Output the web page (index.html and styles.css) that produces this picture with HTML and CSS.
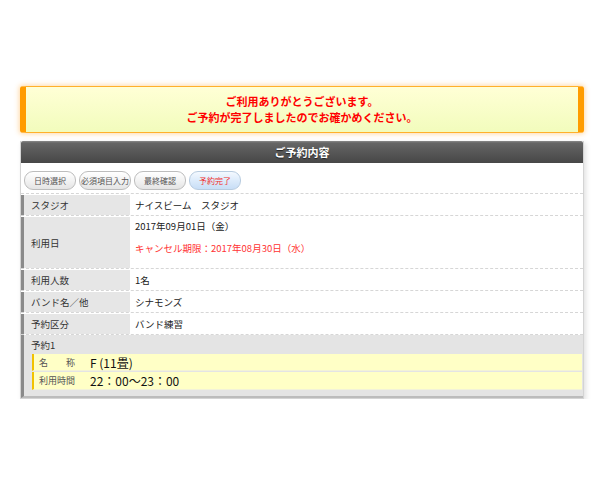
FILE: index.html
```html
<!DOCTYPE html>
<html lang="ja">
<head>
<meta charset="utf-8">
<link rel="stylesheet" href="styles.css">
</head>
<body>
<div class="page">
  <div class="notice">
    <p>ご利用ありがとうございます。</p>
    <p>ご予約が完了しましたのでお確かめください。</p>
  </div>
  <div class="card">
    <div class="card-head">ご予約内容</div>
    <div class="steps">
      <span class="step">日時選択</span>
      <span class="step">必須項目入力</span>
      <span class="step">最終確認</span>
      <span class="step current">予約完了</span>
    </div>
    <div class="row">
      <div class="label">スタジオ</div>
      <div class="value">ナイスビーム　スタジオ</div>
    </div>
    <div class="row tall">
      <div class="label">利用日</div>
      <div class="value">
        <div>2017年09月01日（金）</div>
        <div class="cancel">キャンセル期限：2017年08月30日（水）</div>
      </div>
    </div>
    <div class="row">
      <div class="label">利用人数</div>
      <div class="value">1名</div>
    </div>
    <div class="row">
      <div class="label">バンド名／他</div>
      <div class="value">シナモンズ</div>
    </div>
    <div class="row">
      <div class="label">予約区分</div>
      <div class="value">バンド練習</div>
    </div>
    <div class="reserve">
      <div class="reserve-title">予約1</div>
      <div class="item">
        <span class="item-label">名　　称</span>
        <span class="item-value">F (11畳)</span>
      </div>
      <div class="item">
        <span class="item-label">利用時間</span>
        <span class="item-value">22：00〜23：00</span>
      </div>
    </div>
  </div>
</div>
</body>
</html>
```

FILE: styles.css
```css
* { box-sizing: border-box; }
html, body { margin: 0; padding: 0; background: #fff; }
body {
  font-family: "Noto Sans CJK JP", "Liberation Sans", sans-serif;
  color: #333;
}
.page {
  padding: 86px 16px 0 20px;
}
.notice {
  height: 47px;
  border-top: 1px solid #ffb02a;
  border-bottom: 1px solid #ffb02a;
  border-left: 6px solid #ff9c00;
  border-right: 6px solid #ff9c00;
  border-radius: 3px;
  background: linear-gradient(#ffffd6, #f2fcbc);
  box-shadow: 0 0 5px 1px rgba(255, 170, 60, 0.45);
  padding-top: 6px;
  text-align: center;
}
.notice p {
  margin: 0;
  color: #f00;
  font-weight: bold;
  font-size: 11px;
  line-height: 16px;
}
.card {
  margin-top: 8px;
  border: 1px solid #d4d4d4;
  border-top: none;
  background: #fff;
  box-shadow: 2px 2px 5px rgba(0, 0, 0, 0.12);
}
.card-head {
  height: 22px;
  line-height: 22px;
  text-align: center;
  color: #fff;
  font-weight: bold;
  font-size: 11px;
  background: linear-gradient(#8a8a8a 0, #666 2px, #575757 50%, #474747 100%);
  text-shadow: 0 1px 1px #222;
  border-radius: 2px 2px 0 0;
}
.steps {
  display: flex;
  gap: 3px;
  padding: 8px 3px 3px 3px;
  border-bottom: 1px dashed #d6d6d6;
}
.step {
  width: 52px;
  height: 19px;
  line-height: 17px;
  text-align: center;
  font-size: 8px;
  color: #555;
  border: 1px solid #bdbdbd;
  border-radius: 9px;
  background: linear-gradient(#ffffff, #f3f3f3 50%, #e4e4e4);
}
.step.current {
  color: #f03030;
  border-color: #b8cce0;
  background: linear-gradient(#f4f9ff, #dcebfb 50%, #c8def6);
}
.row {
  display: flex;
  padding-top: 1px;
  border-bottom: 1px dashed #d6d6d6;
}
.label {
  width: 109px;
  height: 20px;
  display: flex;
  align-items: center;
  padding-left: 7px;
  background: #e6e6e6;
  border-left: 3px solid #8a8a8a;
  font-size: 9.5px;
  color: #333;
}
.row.tall .label { height: 51px; }
.value {
  flex: 1;
  padding-left: 5px;
  display: flex;
  align-items: center;
  font-size: 9.5px;
  color: #222;
}
.row.tall .value {
  flex-direction: column;
  align-items: flex-start;
  justify-content: flex-start;
  padding-top: 2px;
  line-height: 14px;
  gap: 8px;
}
.cancel { color: #f33; }
.reserve {
  background: #e4e4e4;
  border-left: 3px solid #8a8a8a;
  border-bottom: 2px solid #bcbcbc;
  padding: 3px 1px 5px 8px;
}
.reserve-title {
  font-size: 9.5px;
  color: #333;
  line-height: 14px;
  margin-left: -1px;
  margin-bottom: 2px;
}
.item {
  display: flex;
  align-items: center;
  height: 17px;
  background: #ffffc6;
  border-left: 2px solid #f2c200;
  border-bottom: 1px solid #f2f2d8;
  margin-bottom: 1px;
}
.item + .item { margin-top: 1px; height: 18px; }
.item-label {
  width: 56px;
  padding-left: 5px;
  font-size: 9px;
  color: #555;
  white-space: pre;
}
.item-value {
  font-size: 12px;
  color: #111;
}
```
